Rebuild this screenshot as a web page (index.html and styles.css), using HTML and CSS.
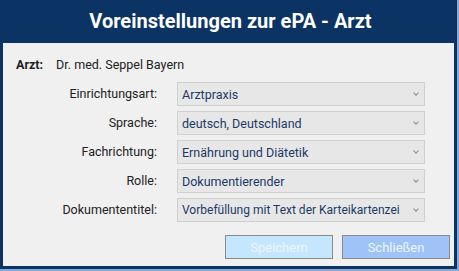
FILE: index.html
```html
<!DOCTYPE html>
<html>
<head>
  <meta charset="UTF-8">
  <title>Voreinstellungen zur ePA - Arzt</title>
  <link rel="stylesheet" href="styles.css">
</head>
<body>
  <div class="frame">
    <div class="window">
      <div class="titlebar">Voreinstellungen zur ePA - Arzt</div>
      <div class="content">
        <div class="arzt">
          <span class="arzt-label">Arzt:</span>
          <span>Dr. med. Seppel Bayern</span>
        </div>

        <div class="form">
          <label>Einrichtungsart:</label>
          <div class="select"><span>Arztpraxis</span><i class="chev"></i></div>

          <label>Sprache:</label>
          <div class="select"><span>deutsch, Deutschland</span><i class="chev"></i></div>

          <label>Fachrichtung:</label>
          <div class="select"><span>Ernährung und Diätetik</span><i class="chev"></i></div>

          <label>Rolle:</label>
          <div class="select"><span>Dokumentierender</span><i class="chev"></i></div>

          <label>Dokumententitel:</label>
          <div class="select"><span class="long">Vorbefüllung mit Text der Karteikartenzei</span><i class="chev"></i></div>
        </div>

        <div class="buttons">
          <button class="btn btn-save">Speichern</button>
          <button class="btn btn-close">Schließen</button>
        </div>
      </div>
    </div>
  </div>
</body>
</html>
```

FILE: styles.css
```css
html, body {
  margin: 0;
  padding: 0;
}
body {
  font-family: Roboto, "Liberation Sans", sans-serif;
  width: 459px;
  height: 271px;
  overflow: hidden;
}
.frame {
  width: 459px;
  height: 271px;
  box-sizing: border-box;
  padding: 0 2px 2px 0;
  background: #8aa8d2;
}
.window {
  height: 100%;
  box-sizing: border-box;
  border: 3px solid #0b3465;
  border-top: none;
  background: #f0f0f0;
  display: flex;
  flex-direction: column;
}
.titlebar {
  background: #0b3465;
  color: #fff;
  font-weight: bold;
  font-size: 20px;
  height: 43px;
  line-height: 43px;
  text-align: center;
  margin: 0 -3px;
  padding-left: 4px;
}
.content {
  flex: 1;
  padding: 0 0 0 13px;
  font-size: 12.5px;
  color: #222;
}
.arzt {
  display: flex;
  gap: 13px;
  margin-top: 14px;
  height: 16px;
  line-height: 16px;
}
.arzt-label {
  font-weight: bold;
}
.form {
  display: grid;
  grid-template-columns: 141px 248px;
  column-gap: 20px;
  row-gap: 5px;
  margin-top: 9px;
}
.form label {
  text-align: right;
  line-height: 24px;
}
.select {
  height: 24px;
  box-sizing: border-box;
  border: 1px solid #cfcfcf;
  background: #e7e7e7;
  color: #1c3a66;
  display: flex;
  align-items: center;
  padding: 0 6px 0 4px;
  white-space: nowrap;
}
.select .long {
  font-size: 12px;
}
.chev {
  width: 3px;
  height: 3px;
  border-right: 1px solid #8a8a8a;
  border-bottom: 1px solid #8a8a8a;
  transform: rotate(45deg);
  margin: -2px 0 0 auto;
  flex: none;
}
.buttons {
  display: flex;
  justify-content: flex-end;
  gap: 9px;
  margin-top: 13px;
  padding-right: 4px;
}
.btn {
  width: 108px;
  height: 24px;
  font-family: Roboto, "Liberation Sans", sans-serif;
  font-size: 13px;
  color: #eef6ff;
  border: 1px solid #8a8a8a;
  padding: 0;
}
.btn-save {
  background: #c4e7ff;
}
.btn-close {
  background: #9fc3f7;
}
```
